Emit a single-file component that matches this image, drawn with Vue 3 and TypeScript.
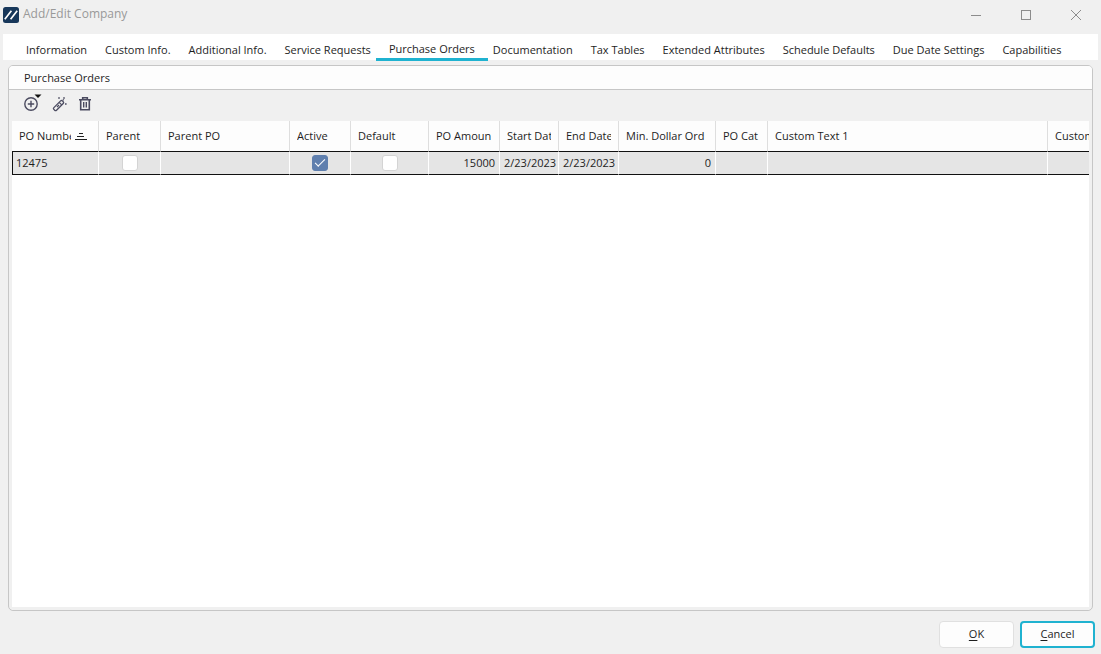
<script setup lang="ts">
import { ref } from 'vue'

interface Column {
  key: string
  label: string
}

const tabs: string[] = [
  'Information',
  'Custom Info.',
  'Additional Info.',
  'Service Requests',
  'Purchase Orders',
  'Documentation',
  'Tax Tables',
  'Extended Attributes',
  'Schedule Defaults',
  'Due Date Settings',
  'Capabilities',
]
const activeTab = ref('Purchase Orders')

const columns: Column[] = [
  { key: 'number', label: 'PO Number' },
  { key: 'parent', label: 'Parent' },
  { key: 'parent-po', label: 'Parent PO' },
  { key: 'active', label: 'Active' },
  { key: 'default', label: 'Default' },
  { key: 'amount', label: 'PO Amoun' },
  { key: 'start', label: 'Start Date' },
  { key: 'end', label: 'End Date' },
  { key: 'min', label: 'Min. Dollar Ord' },
  { key: 'cat', label: 'PO Cat' },
  { key: 'text1', label: 'Custom Text 1' },
  { key: 'text2', label: 'Custom Text 2' },
]

const orders = ref([
  { number: '12475', parent: false, active: true, isDefault: false, amount: 15000, start: '2/23/2023', end: '2/23/2023', min: 0 },
])
</script>

<template>
  <div class="window">
    <header class="titlebar">
      <svg class="logo" width="16" height="16" viewBox="0 0 16 16" aria-hidden="true">
        <rect width="16" height="16" rx="2.5" fill="#17375a" />
        <path d="M1.8 12.2 8.4 3.8M7.6 12.2 14.2 3.8" stroke="#fff" stroke-width="1.7" fill="none" />
      </svg>
      <h1 class="title">Add/Edit Company</h1>
      <div class="controls">
        <button type="button" aria-label="Minimize">
          <svg width="12" height="12" viewBox="0 0 12 12"><path d="M1 6.5h10" /></svg>
        </button>
        <button type="button" aria-label="Maximize">
          <svg width="12" height="12" viewBox="0 0 12 12"><rect x="1.5" y="1.5" width="9" height="9" /></svg>
        </button>
        <button type="button" aria-label="Close">
          <svg width="12" height="12" viewBox="0 0 12 12"><path d="M1 1l10 10M11 1 1 11" /></svg>
        </button>
      </div>
    </header>

    <nav class="tabs" role="tablist">
      <button
        v-for="tab in tabs"
        :key="tab"
        type="button"
        role="tab"
        class="tab"
        :class="{ active: tab === activeTab }"
        :aria-selected="tab === activeTab"
        @click="activeTab = tab"
      >{{ tab }}</button>
    </nav>

    <main class="panel">
      <h2 class="panel-title">Purchase Orders</h2>
      <div class="toolbar">
        <button type="button" class="tool add" aria-label="Add">
          <svg width="20" height="20" viewBox="0 0 20 20" fill="none" stroke="#4b4b60" stroke-width="1.4">
            <circle cx="9" cy="12" r="6.2" />
            <path d="M9 8.8v6.4M5.8 12h6.4" />
            <path d="M12.5 2.5h7L16 6z" fill="#111" stroke="none" />
          </svg>
        </button>
        <button type="button" class="tool" aria-label="Edit">
          <svg width="16" height="16" viewBox="0 0 16 16" fill="none" stroke="#4b4b60" stroke-width="1.3">
            <path d="M1.9 11.6 8.6 4.9q.9-.9 1.8 0l.8.8q.9.9 0 1.8L4.5 14.2q-.9.9-1.8 0l-.8-.8q-.9-.9 0-1.8z" />
            <path d="m7.2 6.4 2.5 2.5M5 11l2-2" />
            <path d="M6.2 1.2h1.6v1.6H6.2zM11.2 1.2h1.6v1.6h-1.6zM13 7.2h1.6v1.6H13z" fill="#4b4b60" stroke="none" />
            <path d="m10.8 4.4 1-1" />
          </svg>
        </button>
        <button type="button" class="tool" aria-label="Delete">
          <svg width="14" height="16" viewBox="0 0 14 16" fill="none" stroke="#4b4b60" stroke-width="1.6">
            <path d="M1 3.7h12M4.7 3.5V1.7h4.6v1.8M2.7 3.7v10.1h8.6V3.7" />
            <path d="M5.7 6v5.6M8.3 6v5.6" stroke-width="1.4" />
          </svg>
        </button>
      </div>

      <div class="grid">
        <table>
          <colgroup>
            <col v-for="c in columns" :key="c.key" :class="'w-' + c.key" />
          </colgroup>
          <thead>
            <tr>
              <th v-for="c in columns" :key="c.key" scope="col">
                <div class="head">
                  <span class="label">{{ c.label }}</span>
                  <svg v-if="c.key === 'number'" class="sort" width="12" height="8" viewBox="0 0 12 8" aria-hidden="true">
                    <path d="M4 1.5h4M2 4.5h7M0 7.5h12" stroke="#222" />
                  </svg>
                </div>
              </th>
            </tr>
          </thead>
          <tbody>
            <tr v-for="o in orders" :key="o.number">
              <td class="first">{{ o.number }}</td>
              <td class="check"><input v-model="o.parent" type="checkbox" aria-label="Parent" /></td>
              <td></td>
              <td class="check"><input v-model="o.active" type="checkbox" aria-label="Active" /></td>
              <td class="check"><input v-model="o.isDefault" type="checkbox" aria-label="Default" /></td>
              <td class="num">{{ o.amount }}</td>
              <td>{{ o.start }}</td>
              <td>{{ o.end }}</td>
              <td class="num">{{ o.min }}</td>
              <td></td>
              <td></td>
              <td></td>
            </tr>
          </tbody>
        </table>
      </div>
    </main>

    <footer class="actions">
      <button type="button" class="btn"><u>O</u>K</button>
      <button type="button" class="btn primary"><u>C</u>ancel</button>
    </footer>
  </div>
</template>

<style>
body {
  margin: 0;
  background: #f0f0f0;
}
</style>

<style scoped>
.window {
  display: flex;
  flex-direction: column;
  min-height: 100vh;
  box-sizing: border-box;
  padding-bottom: 6px;
  background: #f0f0f0;
  color: #1e1e1e;
  font-family: "Open Sans", "Noto Sans", sans-serif;
  font-size: 11px;
  line-height: 16px;
}

button {
  margin: 0;
  padding: 0;
  border: 0;
  background: none;
  color: inherit;
  font: inherit;
}

.titlebar {
  display: flex;
  align-items: center;
  height: 30px;
  margin-bottom: 4px;
  padding-left: 3px;
}

.title {
  flex: 1;
  margin: 0 0 2px 4px;
  color: #999;
  font-size: 12px;
  font-weight: 400;
}

.controls {
  display: flex;
}

.controls button {
  display: flex;
  align-items: center;
  justify-content: center;
  width: 50px;
  height: 30px;
}

.controls svg {
  fill: none;
  stroke: #8c8c8c;
}

.tabs {
  display: flex;
  height: 26px;
  margin: 0 3px 5px;
  padding: 0 14px;
  background: #fff;
}

.tab {
  position: relative;
  padding: 8px 9px 2px;
  white-space: nowrap;
}

.tab.active {
  padding: 7px 9px 3px;
}

.tab.active::after {
  content: "";
  position: absolute;
  right: -4px;
  bottom: -1px;
  left: -4px;
  height: 3px;
  background: #1fb2d0;
}

.panel {
  display: flex;
  flex: 1;
  flex-direction: column;
  margin: 0 8px;
  border: 1px solid #c6c6c6;
  border-radius: 5px;
  overflow: hidden;
}

.panel-title {
  margin: 0;
  padding: 4px 15px 3px;
  border-bottom: 1px solid #c6c6c6;
  background: #fdfdfd;
  font-size: 11px;
  font-weight: 400;
}

.toolbar {
  display: flex;
  align-items: center;
  gap: 10px;
  height: 28px;
  padding: 0 13px 3px;
}

.tool {
  display: flex;
}

.tool.add {
  margin-bottom: 4px;
}

.grid {
  flex: 1;
  margin: 0 3px;
  border-bottom: 3px solid #f0f0f0;
  background: #fff;
  overflow: hidden;
}

table {
  width: 1160px;
  border-collapse: separate;
  border-spacing: 0;
  table-layout: fixed;
}

.w-number { width: 87px; }
.w-parent { width: 62px; }
.w-parent-po { width: 129px; }
.w-active { width: 61px; }
.w-default { width: 78px; }
.w-amount { width: 71px; }
.w-start { width: 59px; }
.w-end { width: 60px; }
.w-min { width: 97px; }
.w-cat { width: 52px; }
.w-text1 { width: 280px; }
.w-text2 { width: 124px; }

th {
  height: 30px;
  padding: 0 7px;
  border-right: 1px solid #dedede;
  background: #fdfdfd;
  font-weight: 400;
  text-align: left;
}

.head {
  display: flex;
  align-items: center;
  gap: 4px;
  height: 28px;
}

.label {
  flex: 1;
  min-width: 0;
  overflow: hidden;
  white-space: nowrap;
}

.sort {
  flex: none;
  margin-right: 4px;
}

td {
  height: 22px;
  padding: 0 4px;
  border-top: 1px solid #111;
  border-right: 1px solid #fff;
  border-bottom: 1px solid #111;
  background: #e5e5e5;
  white-space: nowrap;
}

td.first {
  padding-left: 3px;
  border-left: 1px solid #111;
}

.num {
  text-align: right;
}

.check {
  text-align: center;
}

.check input {
  display: block;
  width: 16px;
  height: 16px;
  margin: 0 auto;
  border: 1px solid #d4d4d4;
  border-radius: 3px;
  background: #fff;
  appearance: none;
}

.check input:checked {
  border-color: #5f7fae;
  background: #5f7fae;
}

.check input:checked::after {
  content: "";
  display: block;
  width: 9px;
  height: 4px;
  margin: 3px 0 0 2px;
  border: solid #fff;
  border-width: 0 0 1px 1px;
  transform: rotate(-45deg);
}

.actions {
  display: flex;
  justify-content: flex-end;
  gap: 6px;
  margin: 10px 6px 0;
}

.btn {
  width: 75px;
  height: 27px;
  padding-bottom: 1px;
  border: 1px solid #e0e0e0;
  border-radius: 4px;
  background: #fdfdfd;
  text-align: center;
}

.btn.primary {
  border: 2px solid #1fb2d0;
}

.btn u {
  text-underline-offset: 2px;
}
</style>
